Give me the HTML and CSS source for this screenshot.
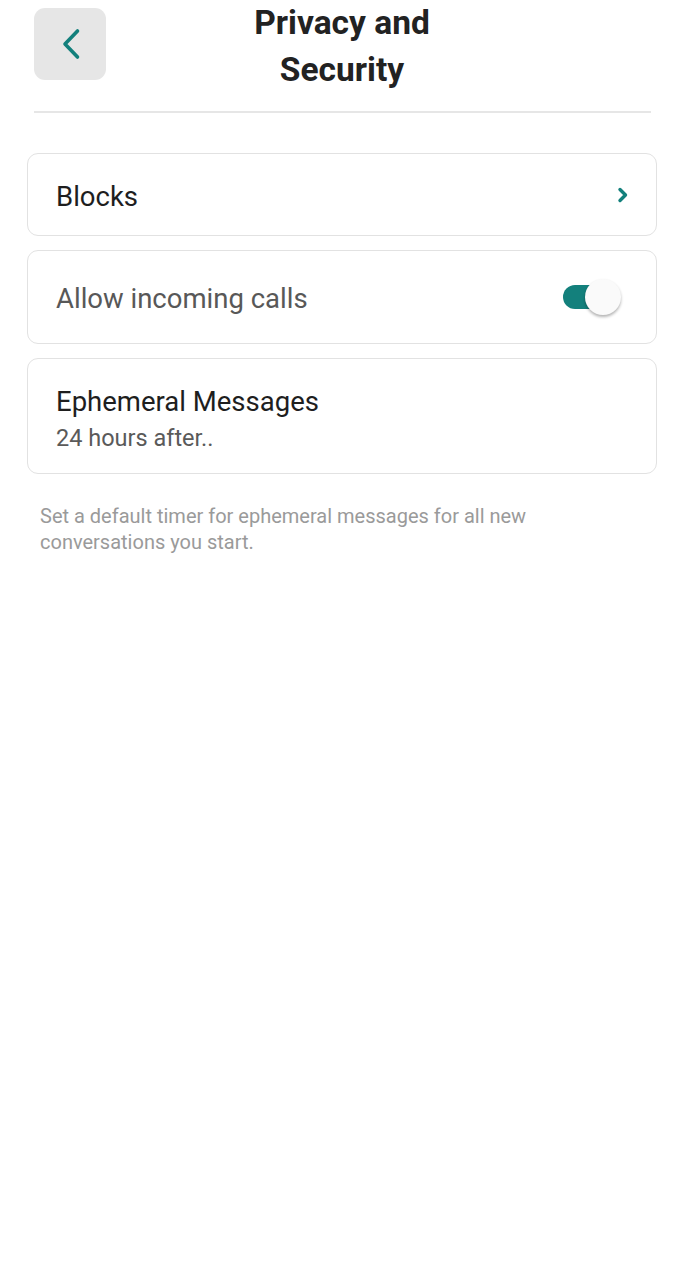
FILE: index.html
```html
<!DOCTYPE html>
<html>
<head>
<meta charset="utf-8">
<link rel="stylesheet" href="styles.css">
</head>
<body>
<div class="screen">
  <header class="header">
    <button class="back" aria-label="Back">
      <svg width="20" height="32" viewBox="0 0 20 32"><path d="M16.5 3 L4 16 L16.5 29" fill="none" stroke="#13807c" stroke-width="3.6" stroke-linecap="round" stroke-linejoin="round"/></svg>
    </button>
    <h1 class="title">Privacy and<br>Security</h1>
    <span></span>
  </header>
  <div class="divider"></div>
  <main class="list">
    <div class="card row">
      <span class="label dark">Blocks</span>
      <svg class="chev" width="12" height="16" viewBox="0 0 12 16"><path d="M3 2.5 L8.5 8 L3 13.5" fill="none" stroke="#13807c" stroke-width="3.4" stroke-linecap="round" stroke-linejoin="round"/></svg>
    </div>
    <div class="card row tall">
      <span class="label grey">Allow incoming calls</span>
      <span class="toggle"><span class="track"></span><span class="thumb"></span></span>
    </div>
    <div class="card stack">
      <span class="label dark">Ephemeral Messages</span>
      <span class="sub">24 hours after..</span>
    </div>
    <p class="note">Set a default timer for ephemeral messages for all new conversations you start.</p>
  </main>
</div>
</body>
</html>
```
FILE: styles.css
```css
* { box-sizing: border-box; }
html, body { margin: 0; padding: 0; background: #fff; }
body { font-family: Roboto, "Noto Sans", sans-serif; color: #1d1d1d; }
.screen { width: 684px; min-height: 1280px; }
.header {
  display: grid;
  grid-template-columns: 1fr auto 1fr;
  align-items: start;
  padding: 8px 34px 0;
  height: 111px;
}
.back {
  width: 72px; height: 72px;
  border: none; border-radius: 11px;
  background: #e6e6e6;
  display: flex; align-items: center; justify-content: center;
  padding: 0 0 0 2px;
}
.title {
  margin: 0;
  font-size: 33.5px;
  font-weight: 700;
  line-height: 47px;
  text-align: center;
  color: #222;
  margin-top: -9px;
}
.divider { height: 2px; background: #e6e6e6; margin: 0 33px 0 34px; }
.list {
  display: flex; flex-direction: column; gap: 14px;
  padding: 40px 27px 0;
}
.card {
  border: 1.5px solid #e2e2e2;
  border-radius: 11px;
  background: #fff;
  padding: 0 28px;
}
.row { display: flex; align-items: center; justify-content: space-between; height: 83px; }
.row.tall { height: 94px; }
.label { font-size: 27.5px; line-height: 32px; }
.row .label { padding-top: 4px; }
.dark { color: #1e1e1e; }
.grey { color: #585858; }
.chev { margin-right: -1px; }
.toggle { position: relative; width: 62px; height: 40px; margin-right: 5px; display: block; }
.track {
  position: absolute; left: 2px; top: 8px;
  width: 44px; height: 24px; border-radius: 12px;
  background: #13807c;
}
.thumb {
  position: absolute; left: 24px; top: 2px;
  width: 36px; height: 36px; border-radius: 50%;
  background: #fafafa;
  box-shadow: 0 2px 3px rgba(0,0,0,0.3);
}
.stack { display: flex; flex-direction: column; padding-top: 27px; height: 116px; }
.sub { font-size: 23.5px; line-height: 30px; color: #5a5a5a; margin-top: 5px; }
.note {
  margin: 15px 0 0 13px;
  font-size: 20px; line-height: 26px;
  color: #9a9a9a;
  padding-right: 60px;
}
```
